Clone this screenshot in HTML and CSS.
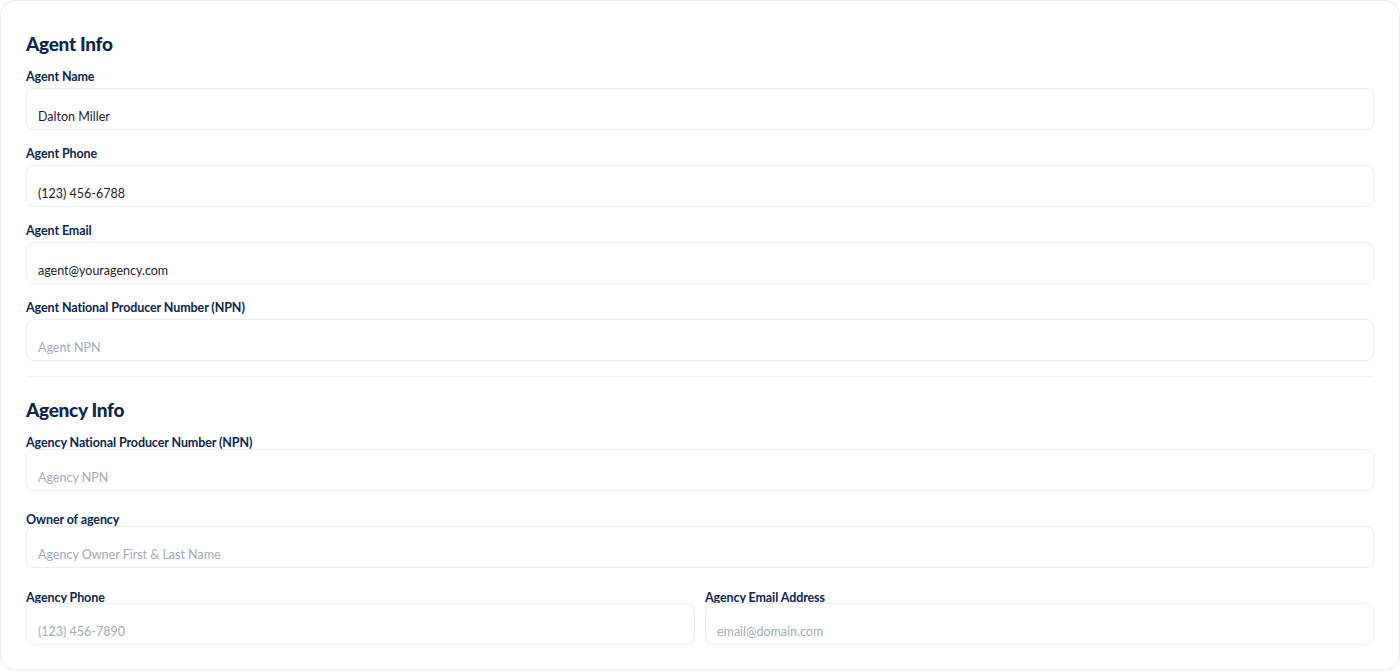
FILE: index.html
```html
<!DOCTYPE html>
<html lang="en">
<head>
<meta charset="utf-8">
<title>Agent Info</title>
<link rel="stylesheet" href="styles.css">
</head>
<body>
<div class="card">
  <section class="section section-agent">
    <h2 class="section-title">Agent Info</h2>
    <div class="field">
      <label class="field-label">Agent Name</label>
      <div class="input">Dalton Miller</div>
    </div>
    <div class="field">
      <label class="field-label">Agent Phone</label>
      <div class="input">(123) 456-6788</div>
    </div>
    <div class="field">
      <label class="field-label">Agent Email</label>
      <div class="input">agent@youragency.com</div>
    </div>
    <div class="field">
      <label class="field-label">Agent National Producer Number (NPN)</label>
      <div class="input placeholder">Agent NPN</div>
    </div>
  </section>
  <hr class="divider">
  <section class="section section-agency">
    <h2 class="section-title">Agency Info</h2>
    <div class="field">
      <label class="field-label">Agency National Producer Number (NPN)</label>
      <div class="input placeholder">Agency NPN</div>
    </div>
    <div class="field">
      <label class="field-label">Owner of agency</label>
      <div class="input placeholder">Agency Owner First &amp; Last Name</div>
    </div>
    <div class="row">
      <div class="field">
        <label class="field-label">Agency Phone</label>
        <div class="input placeholder">(123) 456-7890</div>
      </div>
      <div class="field">
        <label class="field-label">Agency Email Address</label>
        <div class="input placeholder">email@domain.com</div>
      </div>
    </div>
  </section>
</div>
</body>
</html>
```
FILE: styles.css
```css
* { box-sizing: border-box; }
html, body { margin: 0; padding: 0; background: #ffffff; }
body {
  font-family: Lato, "Noto Sans", "Liberation Sans", sans-serif;
  width: 1400px;
  height: 671px;
  overflow: hidden;
}
.card {
  width: 1400px;
  height: 670px;
  border: 1px solid #e6ebf3;
  border-radius: 14px;
  padding: 31px 25px 0 25px;
  background: #ffffff;
}
.section { display: flex; flex-direction: column; }
.section-title {
  margin: 0;
  font-size: 19px;
  line-height: 24px;
  font-weight: 900;
  color: #0c2650;
  letter-spacing: -0.3px;
}
.section-agent { gap: 15px; }
.section-agent .section-title { margin-bottom: -3px; }
.field { display: flex; flex-direction: column; }
.field-label {
  font-size: 12.5px;
  line-height: 18px;
  font-weight: 700;
  color: #0c2650;
  margin-bottom: 2px;
  letter-spacing: -0.1px;
}
.input {
  height: 42px;
  border: 1px solid #eceef2;
  border-radius: 8px;
  padding: 20px 11px 0 11px;
  font-size: 12.5px;
  line-height: 16px;
  color: #1d2129;
  background: #ffffff;
}
.input.placeholder { color: #a3abba; }
.divider {
  border: 0;
  height: 1px;
  background: #f0f2f5;
  margin: 15px 0 21px 0;
}
.section-agency { gap: 20px; }
.section-agency .section-title { margin-bottom: -8px; }
.section-agency .field-label { margin-bottom: -3px; }
.section-agency .row .field-label { margin-bottom: -4px; }
.row {
  display: grid;
  grid-template-columns: 1fr 1fr;
  gap: 10px;
  margin-top: 1px;
}
```
